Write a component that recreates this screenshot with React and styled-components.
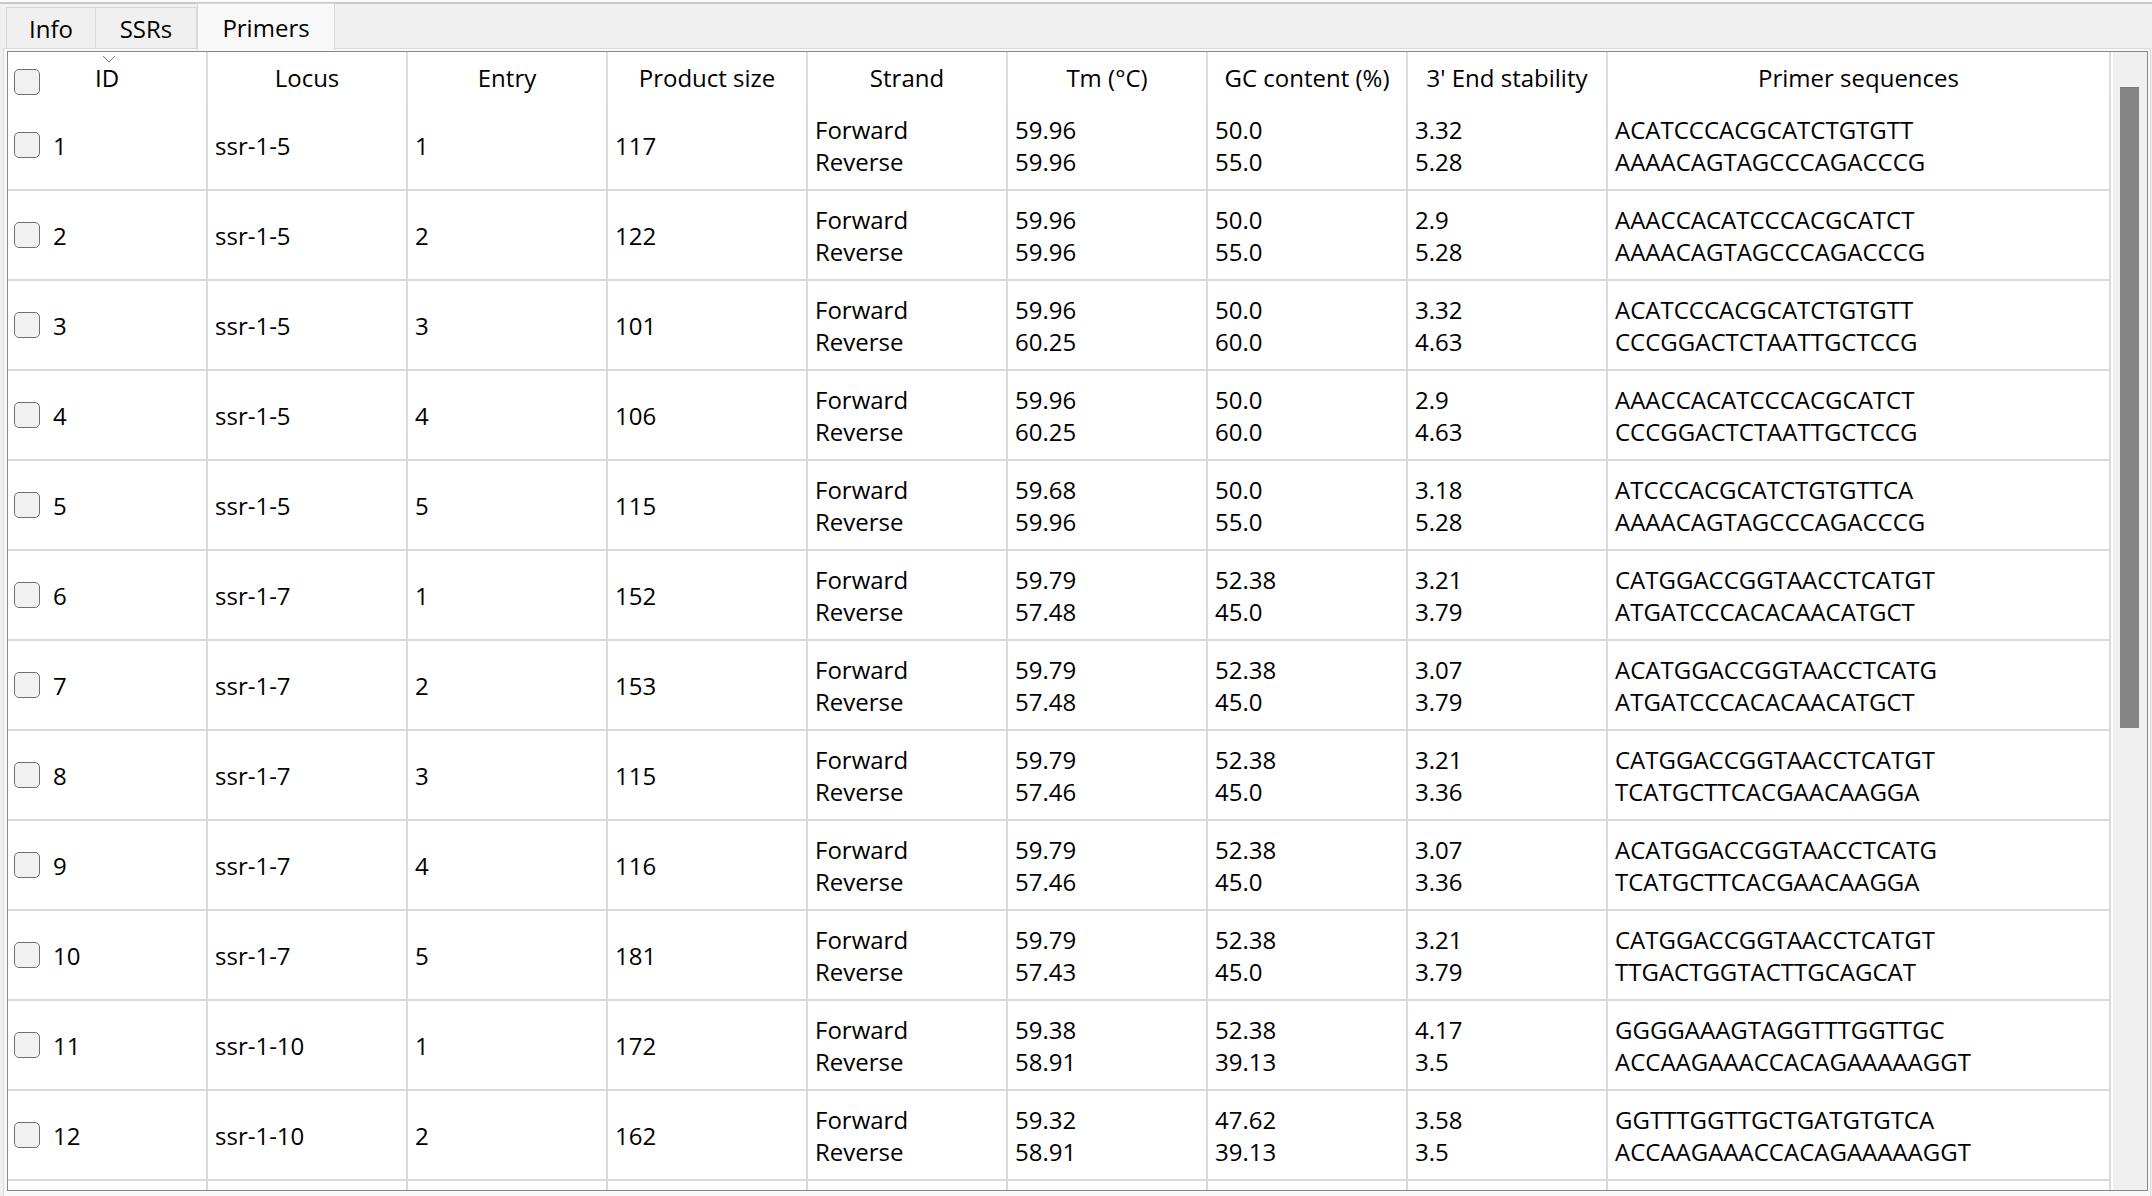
import React from 'react';
import styled, { createGlobalStyle } from 'styled-components';

const FONT = '"Open Sans", "Noto Sans", "DejaVu Sans", sans-serif';

const GlobalStyle = createGlobalStyle`
  html, body {
    margin: 0;
    padding: 0;
    background: #f0f0f0;
  }
  body {
    font-family: ${FONT};
    color: #000;
  }
`;

const rows = [
  { id: 1, locus: 'ssr-1-5', entry: 1, size: 117, tm: ['59.96', '59.96'], gc: ['50.0', '55.0'], stab: ['3.32', '5.28'], seq: ['ACATCCCACGCATCTGTGTT', 'AAAACAGTAGCCCAGACCCG'] },
  { id: 2, locus: 'ssr-1-5', entry: 2, size: 122, tm: ['59.96', '59.96'], gc: ['50.0', '55.0'], stab: ['2.9', '5.28'], seq: ['AAACCACATCCCACGCATCT', 'AAAACAGTAGCCCAGACCCG'] },
  { id: 3, locus: 'ssr-1-5', entry: 3, size: 101, tm: ['59.96', '60.25'], gc: ['50.0', '60.0'], stab: ['3.32', '4.63'], seq: ['ACATCCCACGCATCTGTGTT', 'CCCGGACTCTAATTGCTCCG'] },
  { id: 4, locus: 'ssr-1-5', entry: 4, size: 106, tm: ['59.96', '60.25'], gc: ['50.0', '60.0'], stab: ['2.9', '4.63'], seq: ['AAACCACATCCCACGCATCT', 'CCCGGACTCTAATTGCTCCG'] },
  { id: 5, locus: 'ssr-1-5', entry: 5, size: 115, tm: ['59.68', '59.96'], gc: ['50.0', '55.0'], stab: ['3.18', '5.28'], seq: ['ATCCCACGCATCTGTGTTCA', 'AAAACAGTAGCCCAGACCCG'] },
  { id: 6, locus: 'ssr-1-7', entry: 1, size: 152, tm: ['59.79', '57.48'], gc: ['52.38', '45.0'], stab: ['3.21', '3.79'], seq: ['CATGGACCGGTAACCTCATGT', 'ATGATCCCACACAACATGCT'] },
  { id: 7, locus: 'ssr-1-7', entry: 2, size: 153, tm: ['59.79', '57.48'], gc: ['52.38', '45.0'], stab: ['3.07', '3.79'], seq: ['ACATGGACCGGTAACCTCATG', 'ATGATCCCACACAACATGCT'] },
  { id: 8, locus: 'ssr-1-7', entry: 3, size: 115, tm: ['59.79', '57.46'], gc: ['52.38', '45.0'], stab: ['3.21', '3.36'], seq: ['CATGGACCGGTAACCTCATGT', 'TCATGCTTCACGAACAAGGA'] },
  { id: 9, locus: 'ssr-1-7', entry: 4, size: 116, tm: ['59.79', '57.46'], gc: ['52.38', '45.0'], stab: ['3.07', '3.36'], seq: ['ACATGGACCGGTAACCTCATG', 'TCATGCTTCACGAACAAGGA'] },
  { id: 10, locus: 'ssr-1-7', entry: 5, size: 181, tm: ['59.79', '57.43'], gc: ['52.38', '45.0'], stab: ['3.21', '3.79'], seq: ['CATGGACCGGTAACCTCATGT', 'TTGACTGGTACTTGCAGCAT'] },
  { id: 11, locus: 'ssr-1-10', entry: 1, size: 172, tm: ['59.38', '58.91'], gc: ['52.38', '39.13'], stab: ['4.17', '3.5'], seq: ['GGGGAAAGTAGGTTTGGTTGC', 'ACCAAGAAACCACAGAAAAAGGT'] },
  { id: 12, locus: 'ssr-1-10', entry: 2, size: 162, tm: ['59.32', '58.91'], gc: ['47.62', '39.13'], stab: ['3.58', '3.5'], seq: ['GGTTTGGTTGCTGATGTGTCA', 'ACCAAGAAACCACAGAAAAAGGT'] },
];

const headers = ['ID', 'Locus', 'Entry', 'Product size', 'Strand', 'Tm (°C)', 'GC content (%)', "3' End stability", 'Primer sequences'];

const COLS = 'repeat(8, 200px) 503px';

const Window = styled.div`
  width: 2152px;
  height: 1196px;
  display: flex;
  flex-direction: column;
  overflow: hidden;
  background: #f0f0f0;
  border-top: 2px solid #fafafa;
  box-sizing: border-box;
`;

const TabBar = styled.div`
  height: 46px;
  border-top: 2px solid #c8c8c8;
  box-sizing: border-box;
  display: flex;
  align-items: flex-end;
  padding-left: 6px;
  position: relative;
  z-index: 1;
`;

const Tab = styled.div`
  height: ${p => (p.$active ? '47px' : '41px')};
  margin-bottom: ${p => (p.$active ? '-2px' : '0')};
  width: ${p => p.$w}px;
  box-sizing: border-box;
  border: 1px solid #d9d9d9;
  border-bottom: none;
  border-left: ${p => (p.$first || p.$active ? '1px solid #d9d9d9' : 'none')};
  background: ${p => (p.$active ? '#f9f9f9' : '#f0f0f0')};
  display: flex;
  align-items: center;
  justify-content: center;
  font-size: 24px;
`;

const Pane = styled.div`
  flex: 1;
  margin: 0 1px 0 3px;
  border: 1px solid #d9d9d9;
  border-bottom: none;
  background: #f9f9f9;
  padding: 2px 2px 5px 3px;
  display: flex;
  min-height: 0;
`;

const Frame = styled.div`
  flex: 1;
  border: 1px solid #828790;
  background: #fff;
  display: flex;
  overflow: hidden;
  min-height: 0;
`;

const Grid = styled.div`
  width: 2103px;
  overflow: hidden;
  font-size: 24px;
`;

const HeaderRow = styled.div`
  display: grid;
  grid-template-columns: ${COLS};
  height: 49px;
`;

const HeaderCell = styled.div`
  position: relative;
  display: flex;
  align-items: center;
  justify-content: center;
  border-right: 2px solid #dcdcdc;
  padding-top: 2px;
  white-space: nowrap;
`;

const HeaderCheck = styled.div`
  position: absolute;
  left: 6px;
  top: 17px;
`;

const SortArrow = styled.svg`
  position: absolute;
  left: 94px;
  top: 3px;
`;

const Row = styled.div`
  display: grid;
  grid-template-columns: ${COLS};
  height: 90px;
`;

const Cell = styled.div`
  box-sizing: border-box;
  border-right: 2px solid #d9d9d9;
  border-bottom: 2px solid #d9d9d9;
  padding-left: 7px;
  padding-top: 1px;
  display: flex;
  flex-direction: column;
  justify-content: center;
  line-height: 32px;
  white-space: nowrap;
  font-stretch: ${p => (p.$seq ? '91%' : '100%')};
`;

const IdCell = styled(Cell)`
  flex-direction: row;
  align-items: center;
  justify-content: flex-start;
  padding-left: 6px;
  padding-top: 0;
  gap: 13px;
`;

const IdText = styled.span`
  padding-top: 1px;
`;

const Check = styled.span`
  display: inline-block;
  width: 26px;
  height: 26px;
  box-sizing: border-box;
  border: 1.5px solid #6f6f6f;
  border-radius: 5px;
  background: #f1f1f1;
  flex-shrink: 0;
`;

const Scrollbar = styled.div`
  width: 34px;
  margin-left: 2px;
  background: #f0f0f0;
  padding: 35px 0 0 7px;
  box-sizing: border-box;
`;

const Thumb = styled.div`
  width: 19px;
  height: 640px;
  background: #858585;
  border-top: 1px solid #7a7a7a;
`;

function Lines({ values }) {
  return values.map((v, i) => <div key={i}>{v}</div>);
}

export default function App() {
  return (
    <>
      <GlobalStyle />
      <Window>
        <TabBar>
          <Tab $w={90} $first>Info</Tab>
          <Tab $w={101}>SSRs</Tab>
          <Tab $w={138} $active>Primers</Tab>
        </TabBar>
        <Pane>
          <Frame>
            <Grid>
              <HeaderRow>
                {headers.map((h, i) => (
                  <HeaderCell key={h}>
                    {i === 0 && (
                      <>
                        <HeaderCheck><Check /></HeaderCheck>
                        <SortArrow width="14" height="8" viewBox="0 0 14 8">
                          <polyline points="1,1 7,7 13,1" fill="none" stroke="#7a7a7a" strokeWidth="1" />
                        </SortArrow>
                      </>
                    )}
                    {h}
                  </HeaderCell>
                ))}
              </HeaderRow>
              {rows.map(r => (
                <Row key={r.id}>
                  <IdCell><Check /><IdText>{r.id}</IdText></IdCell>
                  <Cell>{r.locus}</Cell>
                  <Cell>{r.entry}</Cell>
                  <Cell>{r.size}</Cell>
                  <Cell><Lines values={['Forward', 'Reverse']} /></Cell>
                  <Cell><Lines values={r.tm} /></Cell>
                  <Cell><Lines values={r.gc} /></Cell>
                  <Cell><Lines values={r.stab} /></Cell>
                  <Cell $seq><Lines values={r.seq} /></Cell>
                </Row>
              ))}
              <Row>
                {headers.map(h => <Cell key={h} />)}
              </Row>
            </Grid>
            <Scrollbar><Thumb /></Scrollbar>
          </Frame>
        </Pane>
      </Window>
    </>
  );
}
